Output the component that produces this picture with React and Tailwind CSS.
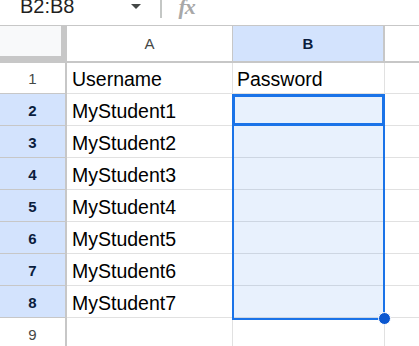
import React from 'react';

const ROWS = [
  ['Username', 'Password'],
  ['MyStudent1', ''],
  ['MyStudent2', ''],
  ['MyStudent3', ''],
  ['MyStudent4', ''],
  ['MyStudent5', ''],
  ['MyStudent6', ''],
  ['MyStudent7', ''],
  ['', ''],
];

export default function App() {
  return (
    <div className="relative w-[419px] h-[346px] overflow-hidden bg-white font-['Liberation_Sans',Arial,sans-serif]">
      {/* Formula bar, cut off at the top */}
      <div className="h-[26px] border-b border-[#c7c7c7] flex items-start">
        <span className="ml-[20px] -mt-[4px] text-[20px] leading-[20px] text-[#1f1f1f]">B2:B8</span>
        <span className="ml-[57px] mt-[4px] w-0 h-0 border-x-[5.5px] border-x-transparent border-t-[5px] border-t-[#444746]" />
        <span className="ml-[19px] w-[2px] h-[18px] bg-[#c4c7c5]" />
        <span className="ml-[16px] -mt-[4px] text-[22px] leading-[22px] italic font-bold text-[#a8a8a8] font-['Liberation_Serif',serif] tracking-[-1px]">fx</span>
      </div>

      {/* Column headers */}
      <div className="flex h-[37px] border-b-2 border-[#c7c7c7]">
        <div className="w-[67px] shrink-0 bg-[#c7c7c7] flex items-start">
          <div className="w-[61px] h-[30px] bg-[#f8f9fa]" />
        </div>
        <div className="w-[166px] shrink-0 border-r border-[#c7c7c7] flex items-center justify-center pt-[2px] text-[15px] text-[#444746]">A</div>
        <div className="w-[152px] shrink-0 border-r-2 border-[#c7c7c7] bg-[#d3e3fd] flex items-center justify-center pt-[2px] text-[15px] font-bold text-[#0b1d3d]">B</div>
        <div className="flex-1" />
      </div>

      {/* Rows */}
      {ROWS.map(([a, b], i) => {
        const sel = i >= 1 && i <= 7;
        return (
          <div key={i} className={`flex ${i === 0 ? 'h-[31px]' : 'h-[32px]'}`}>
            <div
              className={`w-[67px] shrink-0 border-r-2 border-b border-[#c7c7c7] flex items-center justify-center pt-[3px] text-[15px] ${
                sel ? 'bg-[#d3e3fd] font-bold text-[#0b1d3d]' : 'text-[#444746]'
              }`}
            >
              {i + 1}
            </div>
            <div className="w-[166px] shrink-0 border-r border-b border-[#e1e1e1] flex items-center pl-[5px] pt-[4px] text-[19.5px] text-black">{a}</div>
            <div className="w-[152px] shrink-0 border-r border-b border-[#e1e1e1] flex items-center pl-[4px] pt-[4px] text-[19.5px] text-black">{b}</div>
            <div className="flex-1 border-b border-[#e1e1e1]" />
          </div>
        );
      })}

      {/* Selection overlay B2:B8 */}
      <div className="absolute left-[232px] top-[94px] w-[153px] h-[226px] border-2 border-[#1a73e8] bg-[#1a73e8]/10" />
      <div className="absolute left-[232px] top-[94px] w-[153px] h-[32px] border-[3px] border-[#1a73e8]" />
      <div className="absolute left-[379px] top-[313px] w-[11px] h-[11px] rounded-full bg-[#0b57d0] border border-white box-content -translate-x-[1px] -translate-y-[1px]" />
    </div>
  );
}
